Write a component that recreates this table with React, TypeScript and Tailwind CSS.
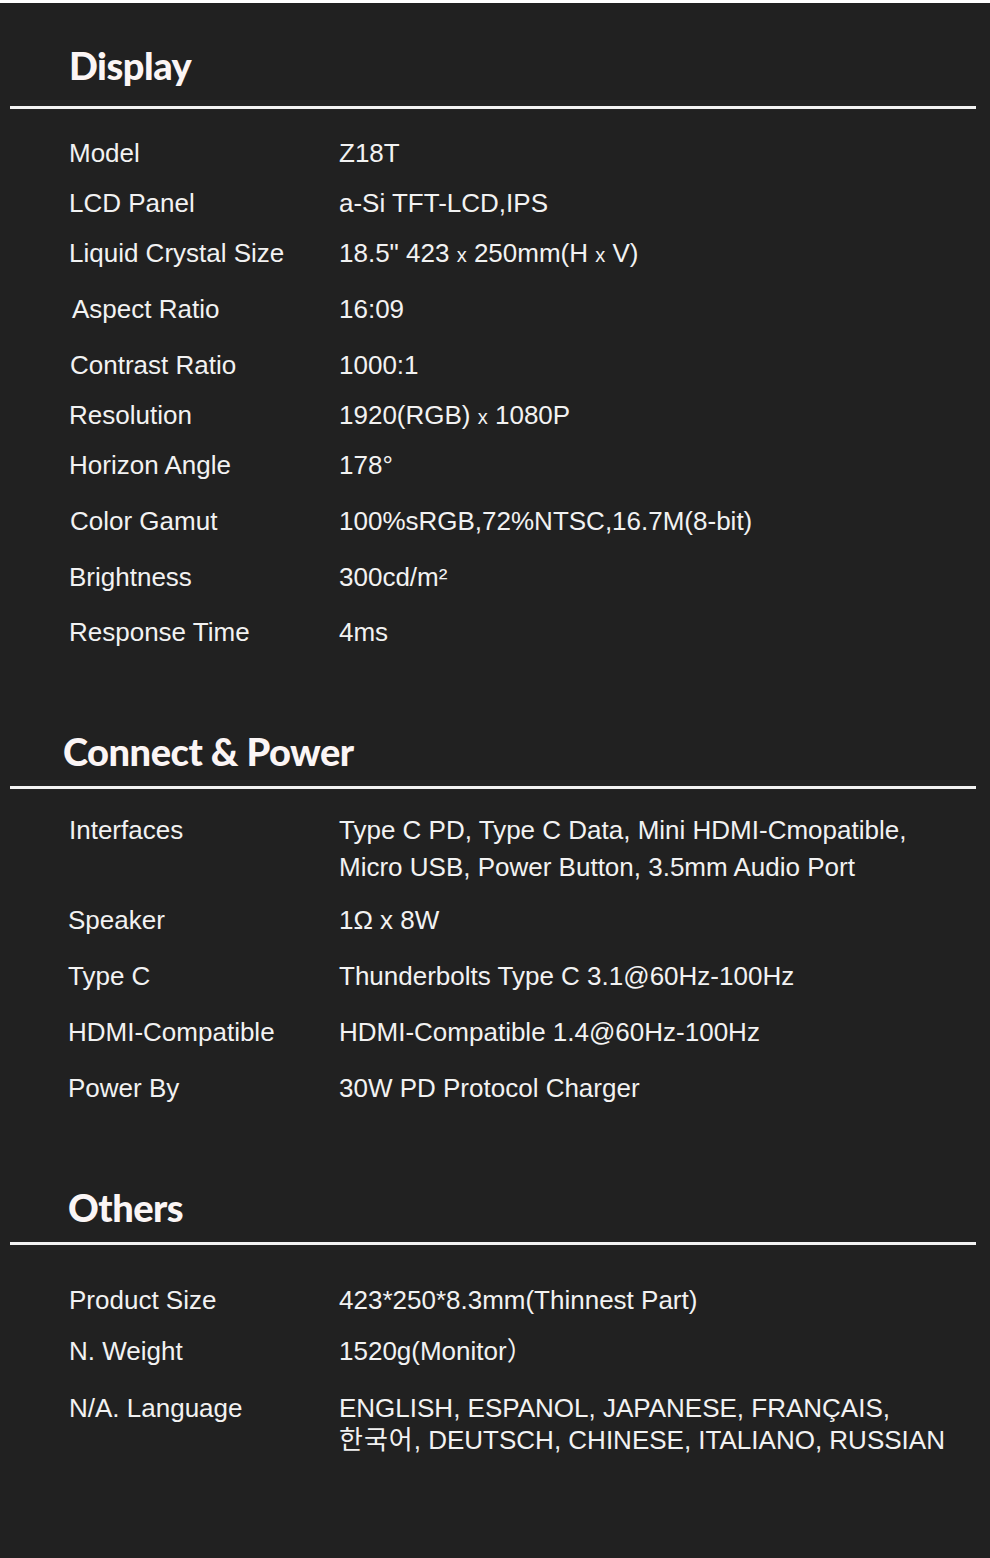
const body = "font-['Liberation_Sans','Arial','Noto_Sans_CJK_KR',sans-serif]";

type Row = { label: string; value: React.ReactNode; gap: string; lh?: string; lx?: string };

const X = () => <span className="text-[20px] leading-none">x</span>;

const display: Row[] = [
  { label: "Model", value: "Z18T", gap: "mt-[29px]" },
  { label: "LCD Panel", value: "a-Si TFT-LCD,IPS", gap: "mt-[20px]" },
  {
    label: "Liquid Crystal Size",
    value: (
      <>
        18.5" 423 <X /> 250mm(H <X /> V)
      </>
    ),
    gap: "mt-[20px]",
  },
  { label: "Aspect Ratio", value: "16:09", gap: "mt-[26px]", lx: "ml-[72px]" },
  { label: "Contrast Ratio", value: "1000:1", gap: "mt-[26px]", lx: "ml-[70px]" },
  {
    label: "Resolution",
    value: (
      <>
        1920(RGB) <X /> 1080P
      </>
    ),
    gap: "mt-[20px]",
  },
  { label: "Horizon Angle", value: "178°", gap: "mt-[20px]" },
  { label: "Color Gamut", value: "100%sRGB,72%NTSC,16.7M(8-bit)", gap: "mt-[26px]", lx: "ml-[70px]" },
  { label: "Brightness", value: "300cd/m²", gap: "mt-[26px]" },
  { label: "Response Time", value: "4ms", gap: "mt-[25px]" },
];

const connect: Row[] = [
  {
    label: "Interfaces",
    value: (
      <>
        Type C PD, Type C Data, Mini HDMI-Cmopatible,
        <br />
        Micro USB, Power Button, 3.5mm Audio Port
      </>
    ),
    gap: "mt-[23px]",
    lh: "leading-[37px]",
  },
  { label: "Speaker", value: "1Ω x 8W", gap: "mt-[19px]", lx: "ml-[68px]" },
  { label: "Type C", value: "Thunderbolts Type C 3.1@60Hz-100Hz", gap: "mt-[26px]", lx: "ml-[68px]" },
  { label: "HDMI-Compatible", value: "HDMI-Compatible 1.4@60Hz-100Hz", gap: "mt-[26px]", lx: "ml-[68px]" },
  { label: "Power By", value: "30W PD Protocol Charger", gap: "mt-[26px]", lx: "ml-[68px]" },
];

const others: Row[] = [
  { label: "Product Size", value: "423*250*8.3mm(Thinnest Part)", gap: "mt-[40px]" },
  { label: "N. Weight", value: "1520g(Monitor）", gap: "mt-[21px]" },
  {
    label: "N/A. Language",
    value: (
      <>
        ENGLISH, ESPANOL, JAPANESE, FRANÇAIS,
        <br />
        <span className="tracking-[1px]">한국어</span>, DEUTSCH, CHINESE, ITALIANO, RUSSIAN
      </>
    ),
    gap: "mt-[26px]",
    lh: "leading-[32px]",
  },
];

function Section({ title, titleX, rows, top, lineGap }: { title: string; titleX: string; rows: Row[]; top: string; lineGap: string }) {
  return (
    <section>
      <h2
        className={`${top} ${titleX} h-[48px] text-[38px] leading-[48px] font-black tracking-[-0.5px] text-[#fbf5f5] font-['Lato',sans-serif]`}
      >
        {title}
      </h2>
      <div className={`${lineGap} ml-[10px] mr-[14px] h-[3px] bg-[#f2f2f2]`} />
      <div className={`${body} text-[26px] text-[#f2f2f2]`}>
        {rows.map((r) => (
          <div key={r.label} className={`${r.gap} flex ${r.lh ?? "leading-[30px]"}`}>
            <div className="w-[339px] shrink-0">
              <span className={r.lx ?? "ml-[69px]"}>{r.label}</span>
            </div>
            <div>{r.value}</div>
          </div>
        ))}
      </div>
    </section>
  );
}

export default function App() {
  return (
    <div className="w-[990px] h-[1558px] bg-[#212121] overflow-hidden">
      <div className="h-[3px] bg-white" />
      <Section title="Display" titleX="pl-[69px]" rows={display} top="mt-[38px]" lineGap="mt-[17px]" />
      <Section title="Connect & Power" titleX="pl-[63px]" rows={connect} top="mt-[80px]" lineGap="mt-[11px]" />
      <Section title="Others" titleX="pl-[68px]" rows={others} top="mt-[80px]" lineGap="mt-[11px]" />
    </div>
  );
}
